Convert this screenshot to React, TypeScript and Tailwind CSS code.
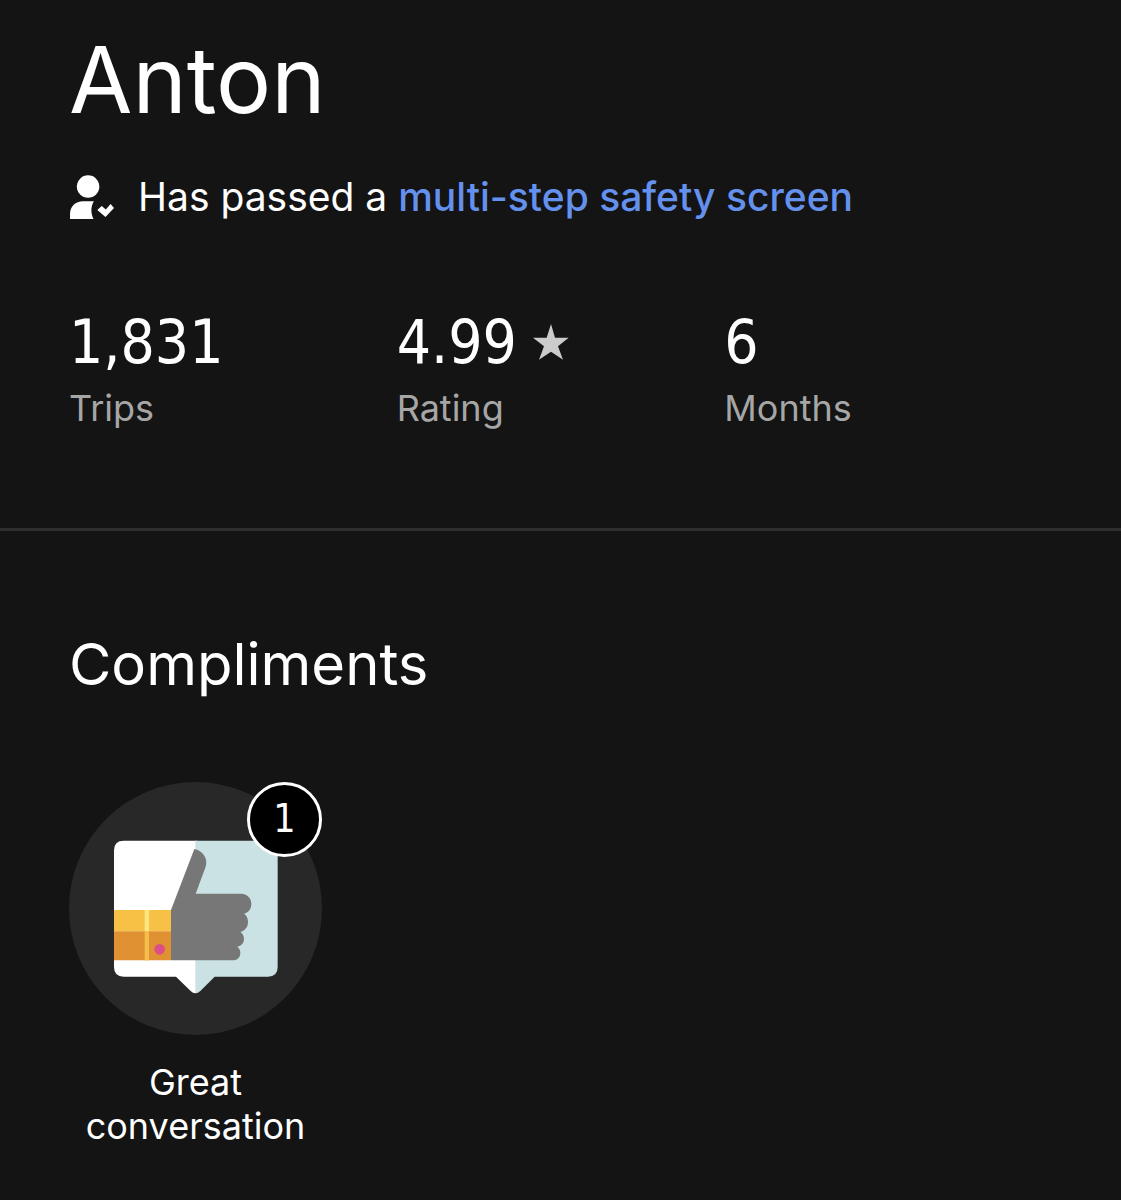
import type { SVGProps } from "react";

const stats = [
  { label: "Trips", value: "1,831" },
  { label: "Rating", value: "4.99", star: true },
  { label: "Months", value: "6" }
];

function VerifiedPersonIcon(props: SVGProps<SVGSVGElement>) {
  return (
    <svg viewBox="0 0 132 132" fill="currentColor" aria-hidden="true" {...props}>
      <circle cx="56" cy="34" r="33" />
      <path d="M3 129v-14c0-23 16-38 38-38h32c-9 15-10 34-1 52z" />
      <path d="M83 103l13-12 12 10 14-16 10 12-25 26z" />
    </svg>
  );
}

function StarIcon(props: SVGProps<SVGSVGElement>) {
  return (
    <svg viewBox="0 0 108 108" fill="currentColor" aria-hidden="true" {...props}>
      <path d="M54 0l12 41h41L75 67l15 40-36-24-36 24 15-40L0 41h41z" />
    </svg>
  );
}

function ThumbsUpArt(props: SVGProps<SVGSVGElement>) {
  return (
    <svg viewBox="27 36 759 759" aria-hidden="true" {...props}>
      {/* speech bubble, the white half runs under the tinted one */}
      <path d="M412 212H191q-29 0-29 29v350q0 29 29 29h157l44 43q7 7 14 7l6-2z" fill="#ffffff" />
      <path d="M406 212h218q29 0 29 29v350q0 29-29 29H464l-43 43q-7 7-15 7z" fill="#cae2e3" />
      {/* sleeve */}
      <path d="M162 420h171v64H162z" fill="#f6c145" />
      <path d="M162 484h171v87H162z" fill="#e09132" />
      <path d="M254 420h13v64h-13z" fill="#ffe681" />
      <path d="M254 484h13v87h-13z" fill="#f5bd4c" />
      <circle cx="299" cy="538" r="16" fill="#dc4f86" />
      {/* hand */}
      <path
        d="M333 420L403 237c24 4 42 28 34 53l-30 81h136c18 0 31 13 31 30s-10 27-22 30c8 5 12 14 12 25 0 16-10 27-23 30 7 5 11 12 11 21 0 12-8 21-20 23 6 5 9 11 9 19 0 13-9 22-22 22H333z"
        fill="#777777"
      />
    </svg>
  );
}

export default function App() {
  return (
    <main className="min-h-screen bg-[#141414] font-['Inter','Liberation_Sans',sans-serif] text-white">
      <section className="px-[69px] pt-6 pb-[93px]">
        <h1 className="text-[92px] leading-[112px]">Anton</h1>

        <div className="mt-[35px] flex items-center gap-6">
          <VerifiedPersonIcon className="size-[45px] shrink-0" />
          <p className="text-[39px] leading-[52px]">
            Has passed a{" "}
            <a href="#safety" className="font-medium text-[#6491ed]">
              multi-step safety screen
            </a>
          </p>
        </div>

        <dl className="mt-[79px] grid grid-cols-3">
          {stats.map((stat) => (
            <div key={stat.label} className="flex flex-col-reverse">
              <dt className="text-[36px] leading-[53px] text-[#a6a6a6]">{stat.label}</dt>
              <dd className="flex items-center gap-4 font-['DejaVu_Sans_Condensed','DejaVu_Sans',sans-serif] text-[60px] leading-[80px]">
                {stat.value}
                {stat.star && <StarIcon className="size-9 text-[#cbcbcb]" />}
              </dd>
            </div>
          ))}
        </dl>
      </section>

      <hr className="border-t-3 border-[#2e2e2e]" />

      <section className="px-[69px] pt-[95px] pb-12">
        <h2 className="text-[58px] leading-[76px]">Compliments</h2>

        <ul className="mt-[80px] flex flex-wrap gap-9">
          <li className="flex w-[253px] flex-col items-center">
            <div className="relative size-[253px] rounded-full bg-[#282828]">
              <ThumbsUpArt className="size-full" />
              <span className="absolute top-0 right-0 flex size-[75px] items-center justify-center rounded-full border-3 border-white bg-black font-['DejaVu_Sans_Condensed','DejaVu_Sans',sans-serif] text-[39px]">
                1
              </span>
            </div>
            <p className="mt-[25px] text-center text-[36px] leading-[44px]">Great conversation</p>
          </li>
        </ul>
      </section>
    </main>
  );
}
